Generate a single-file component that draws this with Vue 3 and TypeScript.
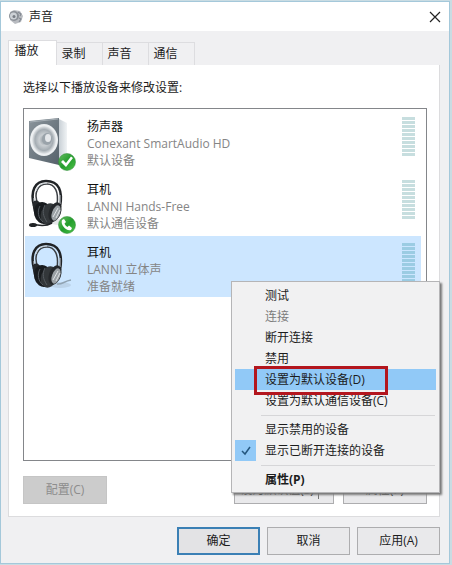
<script setup lang="ts">
import { ref } from 'vue'

interface Device {
  name: string
  driver: string
  status: string
  kind: 'speaker' | 'headset' | 'headphones'
  badge?: 'check' | 'phone'
}

interface MenuEntry {
  label: string
  disabled?: boolean
  active?: boolean
  checked?: boolean
  strong?: boolean
}

const tabs = ['播放', '录制', '声音', '通信']
const activeTab = ref(0)
const selected = ref(2)

const devices: Device[] = [
  { name: '扬声器', driver: 'Conexant SmartAudio HD', status: '默认设备', kind: 'speaker', badge: 'check' },
  { name: '耳机', driver: 'LANNI Hands-Free', status: '默认通信设备', kind: 'headset', badge: 'phone' },
  { name: '耳机', driver: 'LANNI 立体声', status: '准备就绪', kind: 'headphones' },
]

const menuGroups: MenuEntry[][] = [
  [
    { label: '测试' },
    { label: '连接', disabled: true },
    { label: '断开连接' },
    { label: '禁用' },
    { label: '设置为默认设备(D)', active: true },
    { label: '设置为默认通信设备(C)' },
  ],
  [{ label: '显示禁用的设备' }, { label: '显示已断开连接的设备', checked: true }],
  [{ label: '属性(P)', strong: true }],
]
</script>

<template>
  <div class="desktop">
    <main class="window">
      <header class="titlebar">
        <svg class="app-icon" viewBox="0 0 16 16" aria-hidden="true">
          <path d="M2 3 6 1l6 1 3 5-2 6-6 2-5-4z" fill="#b9bcc1" />
          <circle cx="6" cy="7" r="5" fill="#8b9097" />
          <circle cx="5.500" cy="7" r="3.500" fill="#cdd1d6" />
          <circle cx="6" cy="7.500" r="1.500" fill="#777c84" />
          <path d="m10 3 3 2-1 2M11 9l2 1-2 3" fill="none" stroke="#858b94" stroke-width="1.200" />
        </svg>
        <h1>声音</h1>
        <button class="close" type="button" aria-label="关闭">
          <svg viewBox="0 0 12 12"><path d="m1 1 10 10M11 1 1 11" fill="none" stroke="#222" stroke-width="1.200" /></svg>
        </button>
      </header>

      <nav class="tabs" role="tablist">
        <button
          v-for="(tab, i) in tabs"
          :key="tab"
          type="button"
          role="tab"
          :aria-selected="activeTab === i"
          :class="['tab', { current: activeTab === i }]"
          @click="activeTab = i"
        >{{ tab }}</button>
      </nav>

      <section class="panel">
        <p class="hint">选择以下播放设备来修改设置:</p>
        <ul class="devices">
          <li
            v-for="(device, i) in devices"
            :key="device.driver"
            :class="['device', { selected: selected === i }]"
            @click="selected = i"
          >
            <svg v-if="device.kind === 'speaker'" class="picture" viewBox="0 0 50 56" aria-hidden="true">
              <defs>
                <linearGradient id="box" x1="0" y1="0" x2="1" y2="1">
                  <stop offset="0" stop-color="#8a949b" /><stop offset="1" stop-color="#56626b" />
                </linearGradient>
                <linearGradient id="side" x1="0" x2="1">
                  <stop offset="0" stop-color="#c9d0d6" /><stop offset="1" stop-color="#f0f3f5" />
                </linearGradient>
                <radialGradient id="cone">
                  <stop offset="0" stop-color="#8e979d" /><stop offset="0.400" stop-color="#c9ced2" />
                  <stop offset="0.750" stop-color="#a5adb3" /><stop offset="1" stop-color="#e7eaec" />
                </radialGradient>
              </defs>
              <path d="m30 5 8 4v37l-8 5z" fill="url(#side)" />
              <path d="m0 7 30-3v47L0 44z" fill="url(#box)" />
              <ellipse cx="15" cy="26" rx="14" ry="16" fill="#edf0f2" />
              <ellipse cx="15" cy="26" rx="12" ry="14" fill="url(#cone)" />
              <ellipse cx="18" cy="25" rx="5" ry="6" fill="#9aa3aa" />
              <ellipse cx="19" cy="24" rx="3" ry="4" fill="#e5e8eb" />
              <path d="m1 8 28-3" stroke="#a6afb5" />
            </svg>
            <svg v-else class="picture" viewBox="0 0 50 56" aria-hidden="true">
              <ellipse cx="31" cy="45" rx="11" ry="3" fill="#7b8790" opacity="0.200" />
              <path v-if="device.kind === 'headphones'" d="M28 44c5 1 7-3 14-4" fill="none" stroke="#91a3b2" stroke-width="1.500" />
              <path d="M5 29C1 14 6 4 17 4c13 0 17 10 14 26" fill="none" stroke="#202326" stroke-width="2.500" />
              <path d="M9 27C4 16 9 7 18 7c8 0 12 8 10 21" fill="none" stroke="#3b3f43" stroke-width="1.500" />
              <path d="M7 14C9 8 13 6 18 6M5 21v8M31 18v9" fill="none" stroke="#c9d0d5" stroke-width="1" />
              <path d="M4 25c3-3 8-1 8 5v12c-6-1-9-9-8-17z" fill="#26292c" />
              <ellipse cx="14" cy="36" rx="9" ry="11" transform="rotate(-15 14 36)" fill="#181b1e" />
              <ellipse cx="20" cy="37" rx="8" ry="11" transform="rotate(20 20 37)" fill="#33373a" />
              <path d="M11 29c-3 5-2 12 3 16M16 28c-3 6-2 11 2 17" fill="none" stroke="#555b60" />
              <ellipse cx="26" cy="35" rx="6" ry="10" transform="rotate(20 26 35)" fill="#25282b" />
              <ellipse cx="27" cy="36" rx="4" ry="8" transform="rotate(20 27 36)" fill="#9ba1a5" />
              <path d="m24 40 5-9M27 41l4-8" stroke="#e0e3e5" />
              <path v-if="device.kind === 'headset'" d="M23 46c-5 3-12 3-20 1" fill="none" stroke="#202326" stroke-width="1.500" />
              <ellipse v-if="device.kind === 'headset'" cx="4" cy="48" rx="4" ry="2" fill="#202326" />
            </svg>
            <svg v-if="device.badge" class="badge" viewBox="0 0 18 18" aria-hidden="true">
              <defs>
                <linearGradient id="green" x1="0" y1="0" x2="1" y2="1">
                  <stop offset="0" stop-color="#69bd62" /><stop offset="0.500" stop-color="#249d2d" /><stop offset="1" stop-color="#4fc449" />
                </linearGradient>
              </defs>
              <circle cx="9" cy="9" r="8.500" fill="url(#green)" stroke="#318b38" stroke-width="0.500" />
              <path v-if="device.badge === 'check'" d="m3 9 2-2 3 3 5-6.500 2 1.500-7 9z" fill="#fff" />
              <path v-else d="m4 4 2-1 2 3-1.500 1.500c.5 1.500 1.500 2.500 3 3.500L11 9.500l3 2.500-1 2c-4 2-11-5-9-10z" fill="#fff" />
            </svg>
            <div class="details">
              <strong>{{ device.name }}</strong>
              <span>{{ device.driver }}</span>
              <span>{{ device.status }}</span>
            </div>
            <div class="meter" aria-hidden="true"><i v-for="n in 10" :key="n"></i></div>
          </li>
        </ul>
        <div class="panel-actions">
          <button type="button" class="btn configure" disabled>配置(C)</button>
          <button type="button" class="btn default">设为默认值(S)<i class="split"></i></button>
          <button type="button" class="btn">属性(P)</button>
        </div>
      </section>

      <footer class="footer">
        <button type="button" class="btn primary">确定</button>
        <button type="button" class="btn">取消</button>
        <button type="button" class="btn">应用(A)</button>
      </footer>

      <div class="menu" role="menu">
        <div v-for="(group, g) in menuGroups" :key="g" class="group">
          <button
            v-for="entry in group"
            :key="entry.label"
            type="button"
            role="menuitem"
            :disabled="entry.disabled"
            :class="['entry', { active: entry.active, strong: entry.strong }]"
          >
            <span class="tick" :class="{ on: entry.checked }">
              <svg v-if="entry.checked" viewBox="0 0 12 12"><path d="m2 6 3 3 5-7" fill="none" stroke="#24577f" stroke-width="1.500" /></svg>
            </span>
            <span class="label">{{ entry.label }}</span>
          </button>
        </div>
      </div>
    </main>
  </div>
</template>

<style>
body {
  background: #c9dce3;
}
</style>

<style scoped>
* {
  box-sizing: border-box;
}
.desktop {
  padding: 1px 2px 1px 0;
  font-family: "Open Sans", "Noto Sans CJK SC", sans-serif;
  font-size: 12px;
  line-height: 16px;
  color: #1c1c1c;
}
button {
  padding: 0;
  border: 0;
  font: inherit;
  color: inherit;
  background: none;
}
.window {
  position: relative;
  border: 1px solid #a4c8da;
  background: #f0f0f2;
}
.titlebar {
  display: flex;
  align-items: center;
  height: 29px;
  padding: 0 7px 0 7px;
  background: #fff;
}
.app-icon {
  width: 16px;
  height: 16px;
}
h1 {
  flex: 1;
  margin: 0 0 0 5px;
  font-size: 12px;
  font-weight: 400;
}
.close {
  display: flex;
  padding: 1px;
}
.close svg {
  width: 12px;
  height: 12px;
}
.tabs {
  display: flex;
  align-items: flex-end;
  height: 34px;
  padding: 0 7px;
}
.tab {
  width: 46px;
  height: 23px;
  border: 1px solid #dddde0;
  border-width: 1px 1px 0 0;
  padding-right: 12px;
}
.tab.current {
  width: 49px;
  height: 25px;
  border-left-width: 1px;
  padding: 0 12px 4px 0;
  background: #fff;
}
.panel {
  margin: 0 9px 0 7px;
  padding: 15px 12px 12px 14px;
  border: 1px solid #dcdcde;
  border-top: 0;
  background: #fff;
}
.hint {
  margin: 0 0 12px;
}
.devices {
  height: 353px;
  margin: 0;
  padding: 1px 5px 0 1px;
  border: 1px solid #84868a;
  list-style: none;
}
.device {
  position: relative;
  display: flex;
  height: 61px;
  margin-bottom: 2px;
  padding: 0 6px 0 4px;
}
.device.selected {
  background: #cce6ff;
}
.picture {
  width: 50px;
  height: 56px;
  margin-top: 4px;
}
.badge {
  position: absolute;
  left: 33px;
  top: 43px;
  width: 18px;
  height: 18px;
}
.details {
  display: flex;
  flex: 1;
  flex-direction: column;
  padding: 8px 0 0 8px;
  line-height: 17px;
  color: #858585;
}
.details strong {
  font-weight: 400;
  color: #111;
}
.meter {
  display: flex;
  flex-direction: column;
  gap: 1px;
  width: 13px;
  margin-top: 7px;
}
.meter i {
  height: 3px;
  background: #c7dedf;
}
.selected .meter i {
  background: #9bcce3;
}
.panel-actions {
  display: grid;
  grid-template-columns: 84px 1fr 84px;
  margin-top: 15px;
}
.btn {
  height: 28px;
  border: 1px solid #adadaf;
  background: #e9e9eb;
}
.configure {
  border-color: #c5c5c5;
  background: #cccccc;
  color: #8d8d8d;
}
.default {
  position: relative;
  width: 100px;
  margin-right: 9px;
  padding-right: 14px;
  justify-self: end;
}
.split {
  position: absolute;
  top: 4px;
  right: 14px;
  width: 1px;
  height: 18px;
  background: #777;
}
.footer {
  display: flex;
  justify-content: flex-end;
  gap: 7px;
  padding: 10px 9px 8px;
}
.footer .btn {
  width: 83px;
}
.footer .primary {
  border: 2px solid #3b80b5;
  background: #e3e3e5;
}
.menu {
  position: absolute;
  top: 279px;
  right: 9px;
  width: 209px;
  padding: 3px 3px 2px;
  border: 1px solid #b5b5b7;
  background: #f1f1f2;
  box-shadow: 2px 2px 2px #777;
}
.group + .group::before {
  content: "";
  display: block;
  height: 1px;
  margin: 4px 1px 3px 26px;
  background: #d6d6d8;
}
.entry {
  display: flex;
  align-items: center;
  width: 100%;
  height: 21px;
  text-align: left;
}
.entry:disabled {
  color: #7c7c7c;
}
.entry.active {
  background: #91c9f7;
}
.strong {
  font-weight: 700;
}
.tick {
  display: flex;
  align-items: center;
  justify-content: center;
  width: 21px;
  height: 21px;
  margin-right: 9px;
}
.tick.on {
  background: #91c9f7;
}
.tick svg {
  width: 12px;
  height: 12px;
}
.active .label {
  position: relative;
}
.active .label::after {
  content: "";
  position: absolute;
  inset: -6px -23px -7px -11px;
  border: 3px solid #b3161e;
}
</style>
